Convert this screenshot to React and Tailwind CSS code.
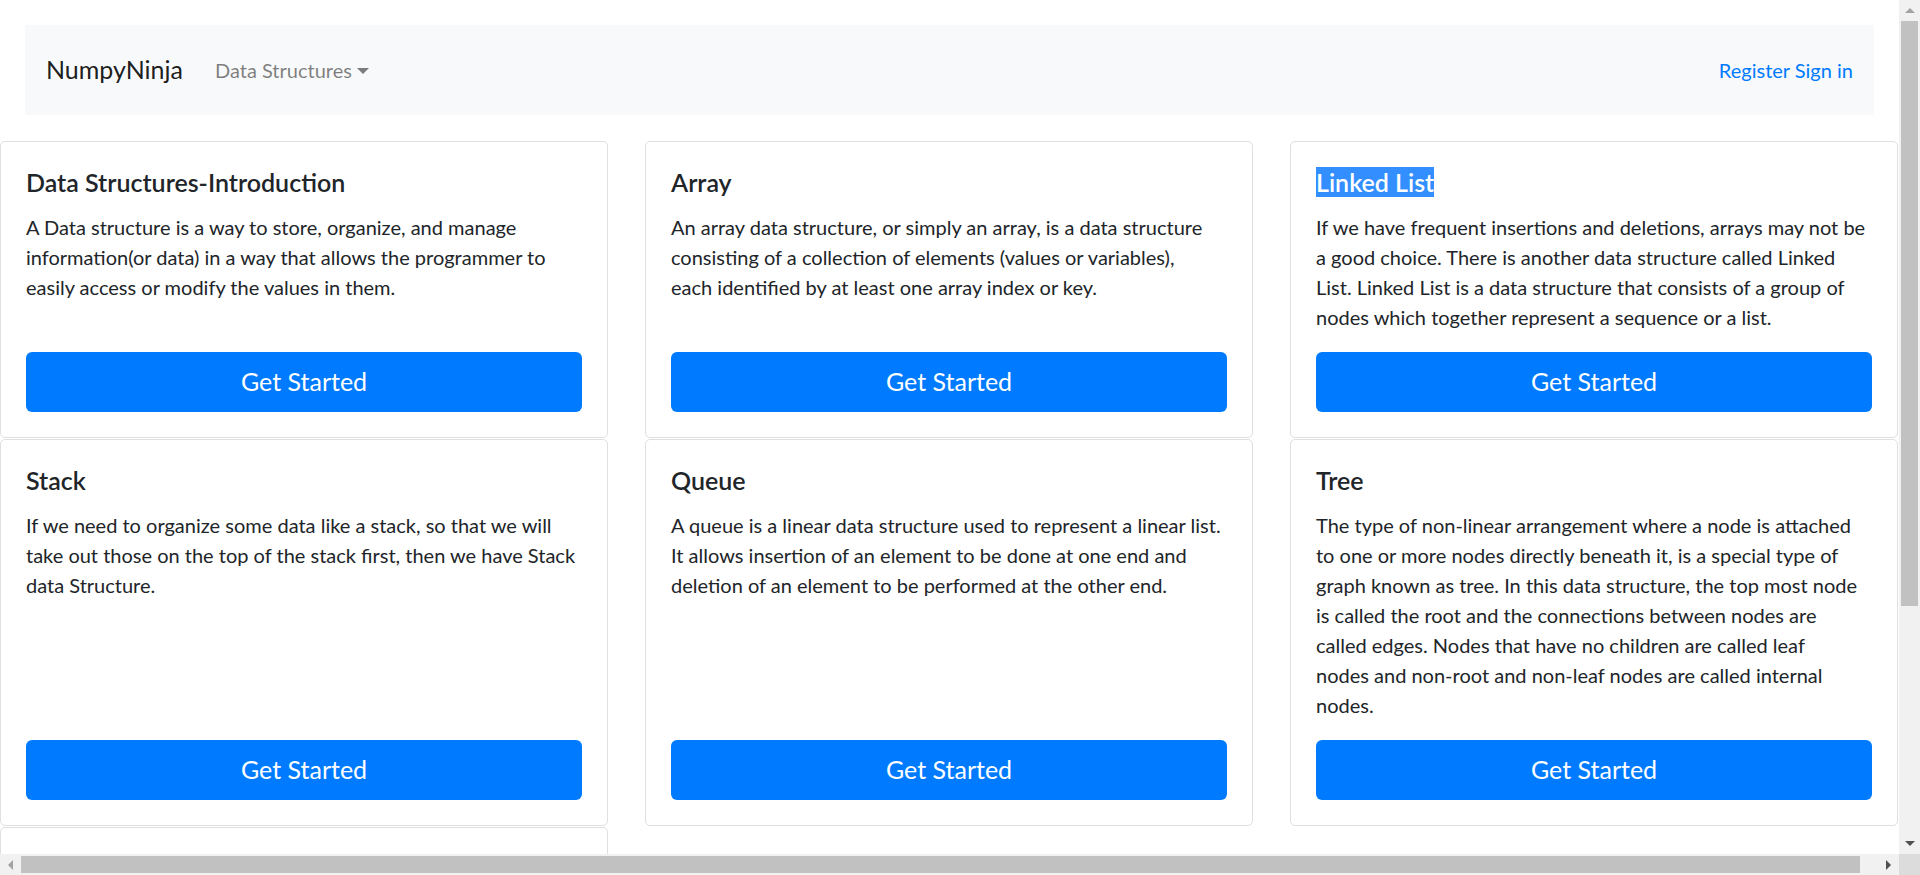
import { useState } from 'react';

const topics = [
  {
    title: 'Data Structures-Introduction',
    lines: [
      'A Data structure is a way to store, organize, and manage',
      'information(or data) in a way that allows the programmer to',
      'easily access or modify the values in them.',
    ],
  },
  {
    title: 'Array',
    lines: [
      'An array data structure, or simply an array, is a data structure',
      'consisting of a collection of elements (values or variables),',
      'each identified by at least one array index or key.',
    ],
  },
  {
    title: 'Linked List',
    selected: true,
    lines: [
      'If we have frequent insertions and deletions, arrays may not be',
      'a good choice. There is another data structure called Linked',
      'List. Linked List is a data structure that consists of a group of',
      'nodes which together represent a sequence or a list.',
    ],
  },
  {
    title: 'Stack',
    lines: [
      'If we need to organize some data like a stack, so that we will',
      'take out those on the top of the stack first, then we have Stack',
      'data Structure.',
    ],
  },
  {
    title: 'Queue',
    lines: [
      'A queue is a linear data structure used to represent a linear list.',
      'It allows insertion of an element to be done at one end and',
      'deletion of an element to be performed at the other end.',
    ],
  },
  {
    title: 'Tree',
    lines: [
      'The type of non-linear arrangement where a node is attached',
      'to one or more nodes directly beneath it, is a special type of',
      'graph known as tree. In this data structure, the top most node',
      'is called the root and the connections between nodes are',
      'called edges. Nodes that have no children are called leaf',
      'nodes and non-root and non-leaf nodes are called internal',
      'nodes.',
    ],
  },
  {
    title: 'Graph',
    lines: [
      'A Graph is a non-linear data structure consisting of nodes and',
      'edges. The nodes are sometimes also referred to as vertices.',
    ],
  },
];

function TopicCard({ topic }) {
  return (
    <div className="flex flex-col rounded-[5px] border border-[#dfdfdf] bg-white p-[25px]">
      <h5 className="mb-[15px] text-[25px] leading-[30px] font-semibold text-[#212529]">
        {topic.selected ? (
          <span className="bg-[#338fff] text-white">{topic.title}</span>
        ) : (
          topic.title
        )}
      </h5>
      <p className="mb-[20px] text-[20px] leading-[30px] text-[#212529]">
        {topic.lines.map((line, i) => (
          <span key={i} className="block whitespace-nowrap">{line}</span>
        ))}
      </p>
      <button className="mt-auto h-[60px] w-full rounded-[6px] bg-[#007bff] text-[25px] text-white">
        Get Started
      </button>
    </div>
  );
}

function Navbar() {
  const [open, setOpen] = useState(false);
  return (
    <div className="px-[25px] pt-[25px] pb-[26px]">
      <nav className="flex h-[90px] items-center bg-[#f8f9fa] px-[21px]">
        <a className="mr-[32px] text-[25px] text-black/90">NumpyNinja</a>
        <button
          onClick={() => setOpen(!open)}
          className="flex items-center text-[20px] text-black/50"
        >
          Data Structures
          <span className="ml-[5px] mt-[2px] h-0 w-0 border-x-[6px] border-t-[6px] border-x-transparent border-t-black/50" />
        </button>
        <div className="ml-auto text-[20px] text-[#007bff]">
          <a>Register</a> <a>Sign in</a>
        </div>
      </nav>
    </div>
  );
}

export default function App() {
  return (
    <div
      className="flex h-[875px] w-[1920px] flex-col overflow-hidden bg-white"
      style={{ fontFamily: 'Lato, "Noto Sans", sans-serif' }}
    >
      <div className="flex min-h-0 flex-1">
        <main className="min-w-0 flex-1 overflow-hidden">
          <Navbar />
          <div className="grid w-[1899px] grid-cols-[608px_608px_608px] gap-x-[37px] gap-y-[1px]">
            {topics.map((t) => (
              <TopicCard key={t.title} topic={t} />
            ))}
          </div>
        </main>
        {/* vertical scrollbar */}
        <div className="flex w-[21px] flex-col bg-[#f1f1f1]">
          <div className="flex h-[21px] items-center justify-center">
            <span className="h-0 w-0 border-x-[5px] border-b-[5px] border-x-transparent border-b-[#a3a3a3]" />
          </div>
          <div className="mx-[2px] h-[585px] bg-[#c1c1c1]" />
          <div className="flex-1" />
          <div className="flex h-[21px] items-center justify-center">
            <span className="h-0 w-0 border-x-[5px] border-t-[5px] border-x-transparent border-t-[#505050]" />
          </div>
        </div>
      </div>
      {/* horizontal scrollbar */}
      <div className="flex h-[21px]">
        <div className="flex flex-1 items-center bg-[#f1f1f1]">
          <div className="flex h-[21px] w-[21px] items-center justify-center">
            <span className="h-0 w-0 border-y-[5px] border-r-[5px] border-y-transparent border-r-[#a3a3a3]" />
          </div>
          <div className="h-[17px] w-[1839px] bg-[#c1c1c1]" />
          <div className="flex-1" />
          <div className="flex h-[21px] w-[21px] items-center justify-center">
            <span className="h-0 w-0 border-y-[5px] border-l-[5px] border-y-transparent border-l-[#505050]" />
          </div>
        </div>
        <div className="w-[21px] bg-[#dcdcdc]" />
      </div>
    </div>
  );
}
